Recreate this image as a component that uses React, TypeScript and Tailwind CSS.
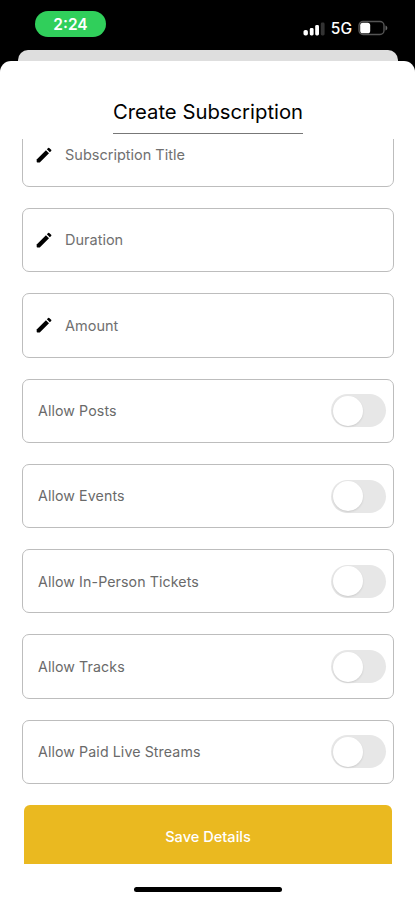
import React, { useState } from "react";

const inputFields = ["Subscription Title", "Duration", "Amount"];

const permissions = [
  { id: "posts", label: "Allow Posts" },
  { id: "events", label: "Allow Events" },
  { id: "tickets", label: "Allow In-Person Tickets" },
  { id: "tracks", label: "Allow Tracks" },
  { id: "streams", label: "Allow Paid Live Streams" },
];

function PencilIcon() {
  return (
    <svg className="w-5 h-5 shrink-0" viewBox="0 0 24 24" fill="#000">
      <path d="M3.2 17.4V20a.9.9 0 0 0 .9.9h2.8L18 9.9l-3.7-3.7L3.2 17.4z" />
      <path d="M20.6 7.1a.9.9 0 0 0 0-1.3l-2.3-2.3a.9.9 0 0 0-1.3 0l-1.6 1.6 3.6 3.6 1.6-1.6z" />
    </svg>
  );
}

function StatusBar() {
  return (
    <div className="flex items-start justify-between h-[50px] pl-[35px] pr-[27px]">
      <div className="flex items-center justify-center mt-[11px] w-[71px] h-[26px] pt-px rounded-full bg-[#30cf5b] text-white text-[15.5px] font-semibold">
        2:24
      </div>
      <div className="flex items-center mt-[18px] h-5 text-white">
        <svg className="w-[22px] h-[14px] mt-px" viewBox="0 0 22 14" fill="#fff">
          <rect x="0.5" y="8" width="4.4" height="5.5" rx="1.8" />
          <rect x="6.8" y="6" width="3.8" height="7.5" rx="1.4" />
          <rect x="12.2" y="3" width="3.8" height="10.5" rx="1.4" />
          <rect x="17.8" y="0.5" width="3.8" height="13" rx="1.4" fill="#333" />
        </svg>
        <span className="ml-[6px] mt-0.5 text-[15.5px] leading-5 font-medium">5G</span>
        <svg className="ml-[6px] w-[30px] h-4" viewBox="0 0 30 16" fill="none">
          <rect x="1" y="1.5" width="25" height="13" rx="4" stroke="#555" strokeWidth="1.4" />
          <path d="M27.5 5.5c1.3.5 1.8 1.4 1.8 2.5s-.5 2-1.8 2.5z" fill="#666" />
          <rect x="2.2" y="2.7" width="10" height="10.6" rx="2.6" fill="#fff" />
        </svg>
      </div>
    </div>
  );
}

function InputRow({ label }: { label: string }) {
  return (
    <label className="flex items-center shrink-0 h-[64.3px] pl-[11px] pr-4 gap-[11px] border border-[#bdbdbd] rounded-[7px]">
      <PencilIcon />
      <input
        type="text"
        placeholder={label}
        className="w-full bg-transparent outline-none text-[14.5px] placeholder:text-[#707070] placeholder:opacity-100"
      />
    </label>
  );
}

type ToggleRowProps = {
  label: string;
  checked: boolean;
  onToggle: () => void;
};

function ToggleRow({ label, checked, onToggle }: ToggleRowProps) {
  return (
    <div className="flex items-center justify-between shrink-0 h-[64.3px] pl-[15px] pr-[7px] border border-[#bdbdbd] rounded-[7px]">
      <span className="text-[14.2px] tracking-[0.1px] text-[#6a6a6a]">{label}</span>
      <button
        type="button"
        role="switch"
        aria-checked={checked}
        aria-label={label}
        onClick={onToggle}
        className={`flex items-center w-[55px] h-[33px] px-[1.5px] rounded-full ${checked ? "justify-end bg-[#30cf5b]" : "bg-[#e7e7e7]"}`}
      >
        <span className="w-[30px] h-[30px] rounded-full bg-white shadow-[0_1px_2px_rgba(0,0,0,0.12)]" />
      </button>
    </div>
  );
}

export default function App() {
  const [enabled, setEnabled] = useState<string[]>([]);

  const toggle = (id: string) =>
    setEnabled((prev) => (prev.includes(id) ? prev.filter((p) => p !== id) : [...prev, id]));

  return (
    <main className="flex flex-col w-full h-[900px] overflow-hidden bg-black font-['Inter','Liberation_Sans',sans-serif]">
      <StatusBar />

      {/* Edge of the page behind the sheet */}
      <div className="shrink-0 h-[11px] ml-[18px] mr-[17px] rounded-t-[10px] bg-[#dedede]" />

      <section className="flex flex-col flex-1 min-h-0 rounded-t-[11px] bg-white">
        <header className="flex justify-center shrink-0 h-[78px] pt-[36px] pl-px">
          <h1 className="h-[37px] border-b border-[#777] text-[20.3px] leading-[30px] text-black whitespace-nowrap">
            Create Subscription
          </h1>
        </header>

        <div className="shrink-0 h-[725px] overflow-hidden pl-[22px] pr-[21px]">
          <form className="flex flex-col gap-[21px] -mt-[16.3px]">
            {inputFields.map((label) => (
              <InputRow key={label} label={label} />
            ))}
            {permissions.map((item) => (
              <ToggleRow
                key={item.id}
                label={item.label}
                checked={enabled.includes(item.id)}
                onToggle={() => toggle(item.id)}
              />
            ))}
            <button
              type="button"
              className="shrink-0 h-16 pt-px mx-[2px] rounded-[6px] bg-[#eab920] text-white text-[14.6px] font-medium"
            >
              Save Details
            </button>
          </form>
        </div>

        {/* Home indicator */}
        <div className="shrink-0 self-center w-[148px] h-[5px] mt-[23px] rounded-full bg-black" />
      </section>
    </main>
  );
}
